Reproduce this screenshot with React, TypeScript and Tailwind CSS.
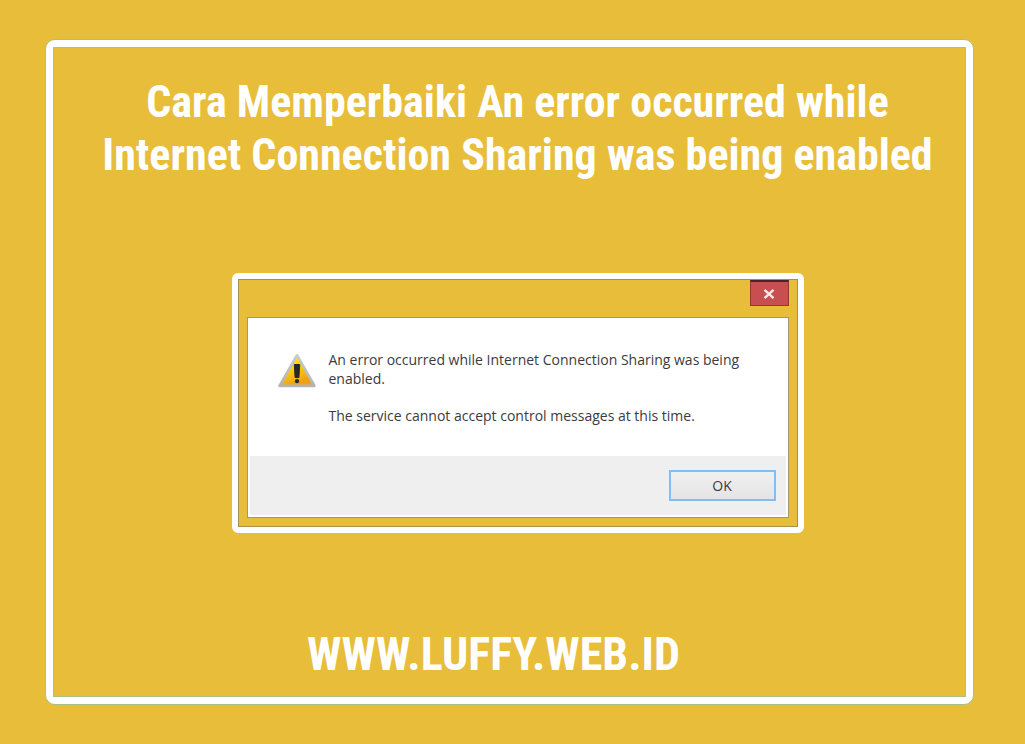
function WarningIcon() {
  return (
    <svg width="40" height="36" viewBox="0 0 40 36" className="shrink-0" aria-hidden="true">
      <defs>
        <linearGradient id="warn-fill" x1="0" y1="0" x2="0.4" y2="1">
          <stop offset="0" stopColor="#f8ee22" />
          <stop offset="0.5" stopColor="#f7cf10" />
          <stop offset="1" stopColor="#f0a010" />
        </linearGradient>
        <linearGradient id="warn-edge" x1="0" y1="0" x2="0" y2="1">
          <stop offset="0" stopColor="#c9c9cc" />
          <stop offset="1" stopColor="#b4b4b8" />
        </linearGradient>
      </defs>
      <path
        d="M20 2.5 L37.2 32.8 H2.8 Z"
        fill="url(#warn-edge)"
        stroke="url(#warn-edge)"
        strokeWidth="3"
        strokeLinejoin="round"
      />
      <path d="M20 4.5 L34.8 31.5 H5.2 Z" fill="url(#warn-fill)" />
      <path d="M17.3 11.5 H22.7 L21.9 24.5 H18.1 Z" fill="#26282c" stroke="#26282c" strokeLinejoin="round" />
      <circle cx="20" cy="28.2" r="2.1" fill="#26282c" />
    </svg>
  );
}

function ErrorDialog() {
  return (
    <section
      role="dialog"
      aria-label="Internet Connection Sharing"
      className="w-[572px] max-w-full rounded-md border-6 border-white bg-white"
    >
      <div className="border border-[#a78f4d] bg-[#e8bd3a] px-2 pb-2">
        {/* Title bar */}
        <div className="flex h-[37px] items-start justify-end">
          <button
            type="button"
            aria-label="Close"
            className="flex h-[26px] w-[39px] items-center justify-center border border-t-2 border-[#98352f] border-t-[#4a2424] bg-[#c84f50]"
          >
            <svg width="12" height="12" viewBox="0 0 12 12" aria-hidden="true">
              <path d="M1.5 1.8 L10.5 10.2 M10.5 1.8 L1.5 10.2" stroke="#f8e9e9" strokeWidth="2.4" />
            </svg>
          </button>
        </div>

        {/* Message */}
        <div className="border border-[#a5966c] bg-white font-['Open_Sans',sans-serif] text-[14px] text-[#3b3b40]">
          <div className="flex items-start gap-3 px-[29px] pt-8 pb-[31px]">
            <div className="pt-[3px]">
              <WarningIcon />
            </div>
            <div className="leading-[19px]">
              <p>
                An error occurred while Internet Connection Sharing was being
                <br />
                enabled.
              </p>
              <p className="mt-[18px]">The service cannot accept control messages at this time.</p>
            </div>
          </div>
          <div className="mx-[2px] mb-[2px] flex h-[59px] items-center justify-end bg-[#efefef] px-[10px]">
            <button
              type="button"
              className="h-[31px] w-[107px] border-2 border-[#84bdf5] bg-linear-to-b from-[#f0f0f0] to-[#e4e4e4] leading-5"
            >
              OK
            </button>
          </div>
        </div>
      </div>
    </section>
  );
}

export default function App() {
  return (
    <div className="flex min-h-screen flex-col bg-[#e8bd3a] py-[39px] pr-[51px] pl-[45px]">
      <main className="flex grow flex-col rounded-[10px] border border-[#a9c08a] bg-white p-[7px]">
        <div className="flex grow flex-col items-center justify-between border border-[#a9c08a] bg-[#e8bd3a] px-4 pt-7 pb-3 font-['Roboto_Condensed',Roboto,sans-serif] font-bold text-white">
          <h1 className="pl-4 text-center text-[44px] leading-[53px]">
            Cara Memperbaiki An error occurred while
            <br />
            Internet Connection Sharing was being enabled
          </h1>
          <div className="flex w-full justify-center pl-4 font-normal">
            <ErrorDialog />
          </div>
          <p className="pr-8 text-[46px] leading-[60px]">WWW.LUFFY.WEB.ID</p>
        </div>
      </main>
    </div>
  );
}
